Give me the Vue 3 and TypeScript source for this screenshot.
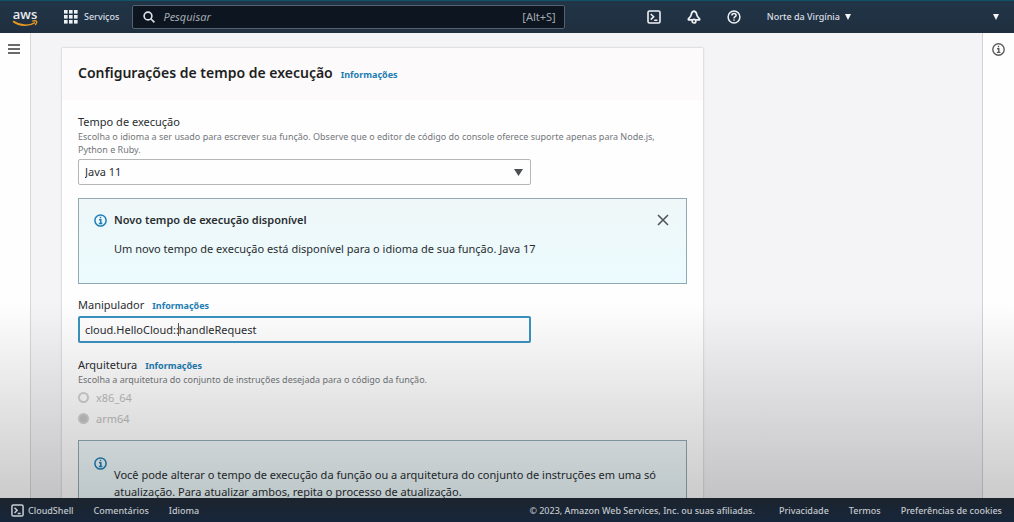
<script setup lang="ts">
import { ref } from 'vue'

const runtime = ref('java11')
const handler = ref('cloud.HelloCloud::handleRequest')
const architecture = ref('arm64')
const search = ref('')
const grid = [0, 5, 10]
const legal = ['Privacidade', 'Termos', 'Preferências de cookies']
</script>

<template>
  <div class="page">
    <header class="top">
      <a class="logo" href="#" aria-label="AWS">
        <span class="logo-text">aws</span>
        <svg width="26" height="7" viewBox="0 0 26 7" fill="none" stroke="#e8981f">
          <path d="M1 1.2C8 6.2 17 6.4 23 2.6" stroke-width="1.7" />
          <path d="M20.2 1.2C22.4.6 24 .7 24.6 1.3 25 2 24.4 3.7 23.2 5" stroke-width="1.3" />
        </svg>
      </a>
      <button class="services" type="button">
        <svg width="14" height="14" viewBox="0 0 14 14" fill="#eef1f4">
          <template v-for="y in grid" :key="y">
            <rect v-for="x in grid" :key="x" :x="x" :y="y" width="3.6" height="3.6" />
          </template>
        </svg>
        <span>Serviços</span>
      </button>
      <label class="search">
        <svg width="12" height="12" viewBox="0 0 12 12" fill="none" stroke="#dfe3e8" stroke-width="1.6">
          <circle cx="5" cy="5" r="3.9" />
          <path d="M7.8 7.8 11.4 11.4" />
        </svg>
        <input v-model="search" type="text" placeholder="Pesquisar" aria-label="Pesquisar" />
        <span class="keys">[Alt+S]</span>
      </label>
      <nav class="tools">
        <button type="button" aria-label="CloudShell">
          <svg width="14" height="14" viewBox="0 0 14 14" fill="none" stroke="#eef1f4" stroke-width="1.6">
            <rect x="1" y="1" width="12" height="12" rx="1.5" />
            <path d="M3.8 4 6.6 6.8 3.8 9.6M7.2 10.2H10.4" />
          </svg>
        </button>
        <button type="button" aria-label="Notificações">
          <svg width="14" height="14" viewBox="0 0 14 14" fill="none" stroke="#eef1f4" stroke-width="1.7" stroke-linejoin="round">
            <path d="M7 1.2C5 1.6 4.3 3.2 4.1 5.2 3.9 6.8 2.8 7.6 1.4 8.8V9.8H12.6V8.8C11.2 7.6 10.1 6.8 9.9 5.2 9.7 3.2 9 1.6 7 1.2Z" />
            <circle cx="7" cy="11.2" r="1.8" fill="#202f40" />
          </svg>
        </button>
        <button type="button" aria-label="Ajuda">
          <svg width="14" height="14" viewBox="0 0 14 14" fill="none" stroke="#eef1f4" stroke-width="1.5">
            <circle cx="7" cy="7" r="5.9" />
            <path d="M4.9 5.6C4.9 4.3 5.8 3.6 7 3.6S9.1 4.3 9.1 5.4C9.1 6.7 7 6.8 7 8.4M7 9.4V10.8" />
          </svg>
        </button>
        <button class="region" type="button">
          <span>Norte da Virgínia</span>
          <svg width="6" height="6" viewBox="0 0 6 6" fill="#f4f6f8"><path d="M0 0H6L3 6Z" /></svg>
        </button>
      </nav>
      <button class="account" type="button" aria-label="Conta">
        <svg width="6" height="6" viewBox="0 0 6 6" fill="#f4f6f8"><path d="M0 0H6L3 6Z" /></svg>
      </button>
    </header>

    <div class="body">
      <aside class="rail">
        <button type="button" aria-label="Abrir navegação">
          <svg width="12" height="10" viewBox="0 0 12 10" stroke="#6a6a6a" stroke-width="2">
            <path d="M0 1H12M0 5H12M0 9H12" />
          </svg>
        </button>
      </aside>

      <main class="content">
        <section class="card">
          <div class="card-head">
            <h1>Configurações de tempo de execução</h1>
            <a class="info" href="#">Informações</a>
          </div>
          <form class="form" @submit.prevent>
            <div class="field">
              <label class="label" for="runtime">Tempo de execução</label>
              <p class="hint">
                Escolha o idioma a ser usado para escrever sua função. Observe que o editor de código do console oferece suporte apenas para Node.js, Python e Ruby.
              </p>
              <div class="select">
                <select id="runtime" v-model="runtime">
                  <option value="java11">Java 11</option>
                </select>
                <svg width="9" height="7" viewBox="0 0 9 7" fill="#4c4f52"><path d="M0 0H9L4.5 7Z" /></svg>
              </div>
            </div>

            <div class="alert">
              <svg class="alert-icon" width="13" height="13" viewBox="0 0 13 13" fill="none" stroke="#1f7fb8" stroke-width="1.5">
                <circle cx="6.5" cy="6.5" r="5.6" />
                <path d="M6.5 2.8V4.3M5 5.7H6.8V9.2M4.8 9.4H8.4" />
              </svg>
              <div class="alert-text">
                <h2>Novo tempo de execução disponível</h2>
                <p>Um novo tempo de execução está disponível para o idioma de sua função. Java 17</p>
              </div>
              <button class="close" type="button" aria-label="Fechar">
                <svg width="12" height="12" viewBox="0 0 12 12" stroke="#4f5558" stroke-width="1.6">
                  <path d="M1 1 11 11M11 1 1 11" />
                </svg>
              </button>
            </div>

            <div class="field handler">
              <div class="label-row">
                <label class="label" for="handler">Manipulador</label>
                <a class="info" href="#">Informações</a>
              </div>
              <div class="input">
                <input id="handler" v-model="handler" type="text" />
                <span class="caret"></span>
              </div>
            </div>

            <fieldset class="field arch">
              <legend class="label-row">
                <span class="label">Arquitetura</span>
                <a class="info" href="#">Informações</a>
              </legend>
              <p class="hint">Escolha a arquitetura do conjunto de instruções desejada para o código da função.</p>
              <div class="radios">
                <label class="radio"><input v-model="architecture" type="radio" value="x86_64" disabled />x86_64</label>
                <label class="radio"><input v-model="architecture" type="radio" value="arm64" disabled />arm64</label>
              </div>
            </fieldset>

            <div class="alert note">
              <svg class="alert-icon" width="13" height="13" viewBox="0 0 13 13" fill="none" stroke="#1f7fb8" stroke-width="1.5">
                <circle cx="6.5" cy="6.5" r="5.6" />
                <path d="M6.5 2.8V4.3M5 5.7H6.8V9.2M4.8 9.4H8.4" />
              </svg>
              <p class="note-text">
                Você pode alterar o tempo de execução da função ou a arquitetura do conjunto de instruções em uma só atualização. Para atualizar ambos, repita o processo de atualização.
              </p>
            </div>
          </form>
        </section>
      </main>

      <aside class="rail right">
        <button type="button" aria-label="Informações">
          <svg width="13" height="13" viewBox="0 0 13 13" fill="none" stroke="#5c5c5c" stroke-width="1.4">
            <circle cx="6.5" cy="6.5" r="5.7" />
            <path d="M6.5 2.8V4.3M5 5.7H6.8V9.2M4.8 9.4H8.4" />
          </svg>
        </button>
      </aside>
      <div class="shade"></div>
    </div>

    <footer class="bottom">
      <button class="shell" type="button">
        <svg width="13" height="13" viewBox="0 0 14 14" fill="none" stroke="#c9ced3" stroke-width="1.6">
          <rect x="1" y="1" width="12" height="12" rx="1.5" />
          <path d="M3.8 4 6.6 6.8 3.8 9.6M7.2 10.2H10.4" />
        </svg>
        <span>CloudShell</span>
      </button>
      <a href="#">Comentários</a>
      <a href="#">Idioma</a>
      <span class="copy">© 2023, Amazon Web Services, Inc. ou suas afiliadas.</span>
      <a v-for="item in legal" :key="item" href="#">{{ item }}</a>
    </footer>
  </div>
</template>

<style>
body {
  margin: 0;
}
</style>

<style scoped>
.page {
  display: flex;
  flex-direction: column;
  height: 100vh;
  overflow: hidden;
  font-family: "Noto Sans", "Open Sans", sans-serif;
  font-size: 11px;
  line-height: 16px;
  color: #2a2d30;
}
.page * {
  box-sizing: border-box;
}
button,
input,
select {
  font: inherit;
  color: inherit;
  margin: 0;
  padding: 0;
  border: 0;
  background: none;
}
a {
  color: inherit;
  text-decoration: none;
}
svg {
  display: block;
  flex: none;
}
h1,
h2,
p {
  margin: 0;
}
.top {
  display: flex;
  align-items: center;
  flex: none;
  height: 33px;
  padding: 0 15px 0 12px;
  border-top: 1px solid #125266;
  background: linear-gradient(#203547, #202f40);
  color: #d9dee3;
  font-size: 9px;
  font-weight: 500;
}
.logo {
  display: flex;
  flex-direction: column;
  align-items: center;
  width: 26px;
}
.logo-text {
  font-family: "Open Sans", sans-serif;
  font-size: 13px;
  font-weight: 600;
  line-height: 12px;
  color: #e8ebee;
}
.services {
  display: flex;
  align-items: center;
  gap: 6px;
  margin-left: 26px;
}
.search {
  display: flex;
  align-items: center;
  flex: 412 1 0;
  gap: 8px;
  height: 24px;
  margin-left: 13px;
  padding: 0 8px 0 10px;
  border: 1px solid #55616c;
  border-radius: 2px;
  background: #0c1520;
  font-size: 11px;
  font-weight: 400;
}
.search input {
  flex: 1;
  min-width: 0;
  outline: 0;
  font-style: italic;
}
.search input::placeholder {
  color: #a3a9af;
  opacity: 1;
}
.keys {
  color: #a3a9af;
}
.tools {
  display: flex;
  align-items: center;
  flex: 346 1 0;
  gap: 26px;
  padding-left: 82px;
}
.region {
  display: flex;
  align-items: center;
  gap: 5px;
}
.body {
  position: relative;
  display: flex;
  flex: 1;
  min-height: 0;
  background: #f4f3f6;
}
.rail {
  display: flex;
  justify-content: center;
  align-items: flex-start;
  flex: none;
  width: 31px;
  padding: 11px 3px 0 0;
  border-right: 1px solid #d8d6d8;
  background: #fefefe;
}
.right {
  width: 32px;
  padding: 10px 0 0;
  border-right: 0;
  border-left: 1px solid #d2d0d4;
}
.content {
  display: grid;
  grid-template-columns: 641fr 279fr;
  flex: 1;
  min-width: 0;
  padding: 15px 0 0 31px;
  overflow: hidden;
}
.card {
  height: max-content;
  background: #fefefe;
  box-shadow: 0 0 2px #b9b5b9;
}
.card-head {
  display: flex;
  align-items: baseline;
  gap: 8px;
  height: 52px;
  padding: 14px 16px 0;
  background: #fcfafa;
}
h1 {
  font-size: 14px;
  line-height: 22px;
  font-weight: 600;
  color: #1d1f22;
}
.info {
  font-size: 9px;
  line-height: 12px;
  font-weight: 700;
  color: #1b7cb3;
}
.form {
  padding: 14px 16px 20px;
}
.field {
  margin: 0;
  padding: 0;
  border: 0;
}
.label {
  display: block;
  font-size: 11px;
  line-height: 16px;
}
.label-row {
  display: flex;
  align-items: baseline;
  gap: 8px;
  padding: 0;
}
.hint {
  padding-right: 16px;
  font-size: 9px;
  line-height: 13px;
  color: #73777b;
}
.select {
  display: grid;
  align-items: center;
  width: calc(75% - 4px);
  height: 26px;
  margin-top: 3px;
}
.select select {
  grid-area: 1 / 1;
  width: 100%;
  height: 26px;
  padding: 0 6px;
  appearance: none;
  border: 1px solid #b4b6b8;
  border-radius: 2px;
  background: #fefefe;
}
.select svg {
  grid-area: 1 / 1;
  justify-self: end;
  margin-right: 8px;
  pointer-events: none;
}
.alert {
  display: flex;
  align-items: flex-start;
  gap: 7px;
  min-height: 86px;
  margin-top: 13px;
  padding: 13px 17px 0 15px;
  border: 1px solid #92a9b4;
  background: linear-gradient(#eff7f8, #ebfbfe);
}
.alert-icon {
  margin-top: 2px;
}
.alert-text {
  flex: 1;
}
h2 {
  font-size: 11px;
  line-height: 16px;
  font-weight: 600;
}
.alert-text p {
  margin-top: 13px;
}
.close {
  margin-top: 2px;
}
.handler {
  margin-top: 13px;
}
.input {
  position: relative;
  width: calc(75% - 4px);
  margin-top: 3px;
}
.input input {
  display: block;
  width: 100%;
  height: 27px;
  padding: 0 5px;
  border: 2px solid #3b92bf;
  border-radius: 2px;
  outline: 0;
  background: #fefefe;
}
.caret {
  position: absolute;
  top: 7px;
  left: 100px;
  width: 1px;
  height: 13px;
  background: #55585a;
}
.arch {
  margin-top: 14px;
}
.radios {
  margin-top: 1px;
}
.radio {
  display: flex;
  align-items: center;
  gap: 7px;
  height: 21px;
  color: #bcbcbc;
}
.radio input {
  appearance: none;
  width: 11px;
  height: 11px;
  border: 2px solid #d0d0d0;
  border-radius: 50%;
}
.radio input:checked {
  background: #c4c4c4;
}
.note {
  margin-top: 11px;
  padding-top: 14px;
}
.note-text {
  flex: 1;
  margin-top: 11px;
  line-height: 17px;
}
.shade {
  position: absolute;
  inset: 58% 0 0;
  background: linear-gradient(rgba(0, 0, 0, 0), rgba(0, 0, 0, 0.2));
  pointer-events: none;
}
.bottom {
  display: flex;
  align-items: center;
  flex: none;
  gap: 20px;
  height: 24px;
  padding: 1px 12px 0 11px;
  background: linear-gradient(#1c242d, #17263b);
  color: #c3c7cb;
  font-size: 9px;
  font-weight: 500;
}
.shell {
  display: flex;
  align-items: center;
  gap: 4px;
}
.copy {
  margin: 0 4px 0 auto;
}
</style>
